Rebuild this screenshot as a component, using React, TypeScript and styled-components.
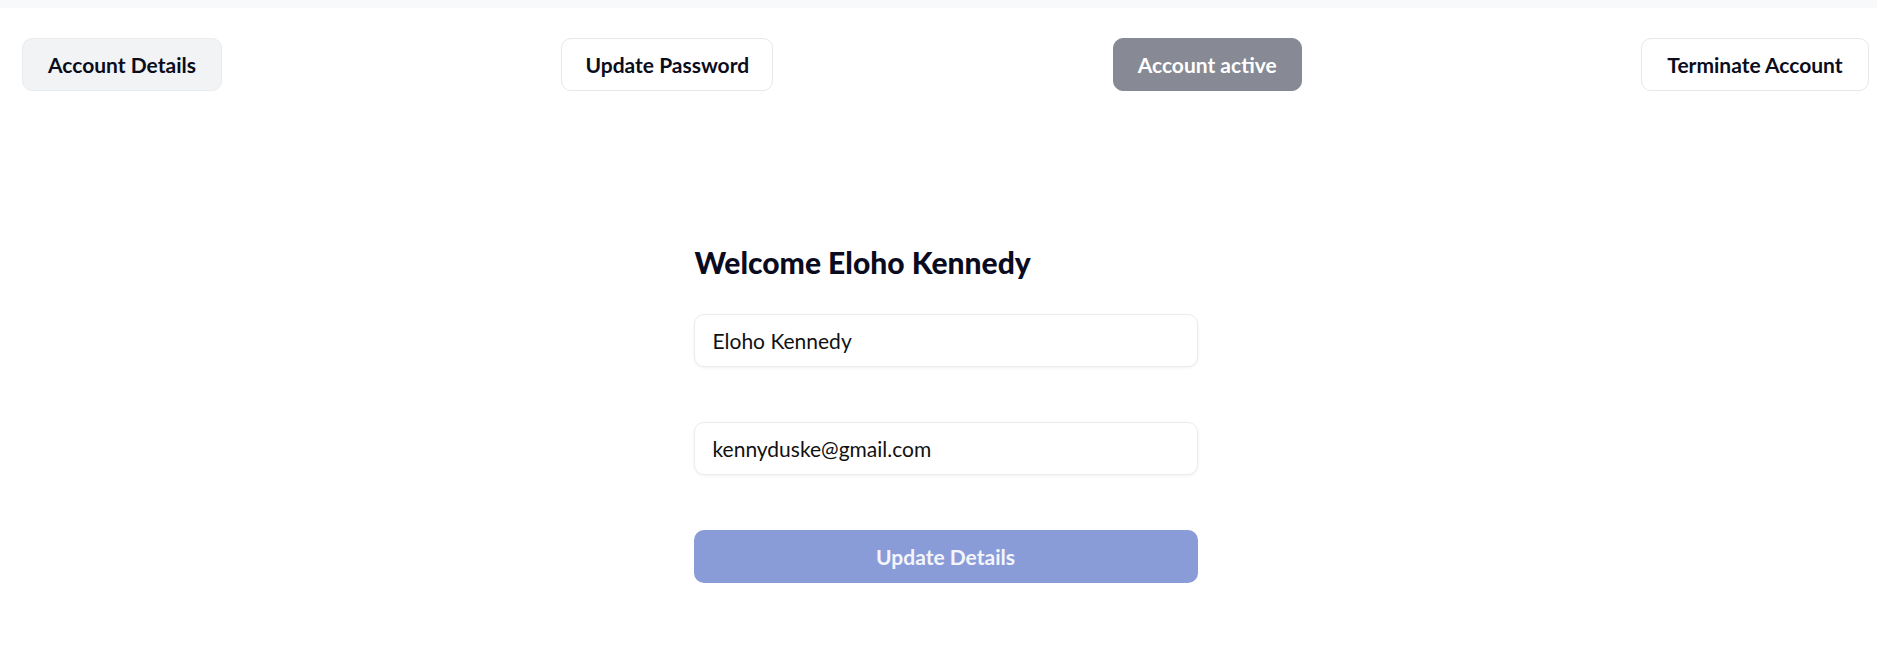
import React from "react";
import styled, { createGlobalStyle } from "styled-components";

const GlobalStyle = createGlobalStyle`
  html, body { margin: 0; padding: 0; background: #ffffff; }
  body { font-family: Lato, "Noto Sans", sans-serif; color: #0b0d1c; }
  * { box-sizing: border-box; }
`;

const Page = styled.div`
  width: 1877px;
  min-height: 658px;
  display: flex;
  flex-direction: column;
`;

const TopBand = styled.div`
  height: 8px;
  background: #f8f9fa;
`;

const Content = styled.div`
  padding: 30px 8px 0 22px;
  display: flex;
  flex-direction: column;
`;

const Nav = styled.nav`
  display: flex;
  justify-content: space-between;
  align-items: center;
`;

type Variant = "selected" | "plain" | "status";

const NavButton = styled.button<{ $variant: Variant; $w: number }>`
  height: 53px;
  width: ${(p) => p.$w}px;
  display: flex;
  align-items: center;
  justify-content: center;
  padding: 0;
  border-radius: 10px;
  font-family: Lato, "Noto Sans", sans-serif;
  font-size: 21px;
  font-weight: 700;
  cursor: pointer;
  border: 1px solid
    ${(p) => (p.$variant === "status" ? "#878a94" : p.$variant === "selected" ? "#e9ecef" : "#e5e7eb")};
  background: ${(p) => (p.$variant === "status" ? "#878a94" : p.$variant === "selected" ? "#f1f3f5" : "#ffffff")};
  color: ${(p) => (p.$variant === "status" ? "#ffffff" : "#0b0d1c")};
`;

const Form = styled.form`
  align-self: center;
  width: 504px;
  margin-top: 154px;
  display: flex;
  flex-direction: column;
`;

const Heading = styled.h2`
  margin: 0 0 34px 1px;
  font-family: Lato, "Noto Sans", sans-serif;
  font-weight: 900;
  font-size: 30px;
  line-height: 35px;
  color: #0a0b1e;
`;

const Fields = styled.div`
  display: flex;
  flex-direction: column;
  gap: 55px;
`;

const Input = styled.input`
  height: 53px;
  width: 100%;
  padding: 0 18px;
  border: 1px solid #ececec;
  border-radius: 10px;
  box-shadow: 0 1px 3px rgba(0, 0, 0, 0.06);
  background: #ffffff;
  font-family: Lato, "Noto Sans", sans-serif;
  font-size: 21px;
  color: #111111;
  outline: none;
`;

const Submit = styled.button`
  height: 53px;
  width: 100%;
  border: none;
  border-radius: 10px;
  background: #8a9cd8;
  color: #f4f5fb;
  font-family: Lato, "Noto Sans", sans-serif;
  font-size: 21px;
  font-weight: 700;
  cursor: pointer;
`;

export default function App() {
  return (
    <Page>
      <GlobalStyle />
      <TopBand />
      <Content>
        <Nav>
          <NavButton $variant="selected" $w={200}>Account Details</NavButton>
          <NavButton $variant="plain" $w={212}>Update Password</NavButton>
          <NavButton $variant="status" $w={189}>Account active</NavButton>
          <NavButton $variant="plain" $w={228}>Terminate Account</NavButton>
        </Nav>
        <Form onSubmit={(e) => e.preventDefault()}>
          <Heading>Welcome Eloho Kennedy</Heading>
          <Fields>
            <Input defaultValue="Eloho Kennedy" />
            <Input defaultValue="kennyduske@gmail.com" />
            <Submit type="submit">Update Details</Submit>
          </Fields>
        </Form>
      </Content>
    </Page>
  );
}
